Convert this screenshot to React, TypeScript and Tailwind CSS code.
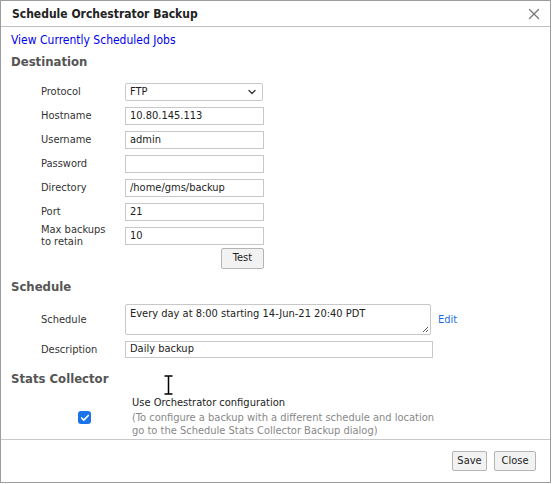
import { X, ChevronDown, Check } from 'lucide-react'

const font = { fontFamily: '"DejaVu Sans Condensed", "DejaVu Sans", sans-serif' }

const fields = [
  { label: 'Hostname', value: '10.80.145.113' },
  { label: 'Username', value: 'admin' },
  { label: 'Password', value: '' },
  { label: 'Directory', value: '/home/gms/backup' },
  { label: 'Port', value: '21' },
]

function Row({ label, children }: { label: React.ReactNode; children: React.ReactNode }) {
  return (
    <div className="flex items-center h-[24px]">
      <div className="w-[84px] pl-[30px] shrink-0 box-content text-[#333] leading-[12px]">{label}</div>
      {children}
    </div>
  )
}

function TextBox({ value, w = 'w-[139px] h-[18px]' }: { value: string; w?: string }) {
  return (
    <div className={`${w} border border-[#c8c8c8] px-[4px] flex items-center text-[#222]`}>{value}</div>
  )
}

function Heading({ children }: { children: React.ReactNode }) {
  return <div className="font-bold text-[13px] text-[#555] h-[22px] flex items-center">{children}</div>
}

function Button({ children, w }: { children: React.ReactNode; w: string }) {
  return (
    <button className={`${w} border border-[#b4b4b4] rounded-[2px] bg-[#f2f2f2] text-[#222] text-[11px] flex items-center justify-center`}>
      {children}
    </button>
  )
}

export default function App() {
  return (
    <div className="w-[553px] h-[484px] bg-white relative text-[11px]" style={font}>
      <div className="w-[551px] h-[483px] border border-[#9c9c9c] flex flex-col">
        {/* title bar */}
        <div className="h-[26px] border-b border-[#c0c0c0] flex items-center justify-between pl-[11px] pr-[7px] shrink-0">
          <span className="font-bold text-[12px] text-[#222]">Schedule Orchestrator Backup</span>
          <X size={18} strokeWidth={1.75} className="text-[#777]" />
        </div>

        <div className="flex-1 px-[10px] pt-[5px]">
          <a className="text-[#0000ee] text-[12px] h-[16px] flex items-center">View Currently Scheduled Jobs</a>
          <div className="mt-[3px]">
            <Heading>Destination</Heading>
          </div>

          <div className="mt-[7px]">
            <Row label="Protocol">
              <div className="w-[138px] h-[18px] border border-[#c8c8c8] rounded-[2px] pl-[4px] pr-[4px] flex items-center justify-between text-[#222]">
                <span>FTP</span>
                <ChevronDown size={12} strokeWidth={3} className="text-[#444]" />
              </div>
            </Row>
            {fields.map(f => (
              <Row key={f.label} label={f.label}>
                <TextBox value={f.value} />
              </Row>
            ))}
            <Row label={<>Max backups<br />to retain</>}>
              <TextBox value="10" />
            </Row>
            <div className="flex pl-[210px]">
              <Button w="w-[43px] h-[21px]">Test</Button>
            </div>
          </div>

          <div className="mt-[7px]">
            <Heading>Schedule</Heading>
          </div>

          <div className="flex items-center mt-[5px] h-[32px]">
            <div className="w-[84px] pl-[30px] pt-[3px] shrink-0 box-content text-[#333]">Schedule</div>
            <div className="relative w-[306px] h-[31px] border border-[#c8c8c8] rounded-[2px] px-[4px] pt-[1px] text-[#222]">
              Every day at 8:00 starting 14-Jun-21 20:40 PDT
              <svg className="absolute right-[1px] bottom-[1px]" width="7" height="7" viewBox="0 0 7 7">
                <path d="M6 1 L1 6 M6 4 L4 6" stroke="#555" strokeWidth="1" />
              </svg>
            </div>
            <a className="ml-[7px] pt-[3px] text-[#1a6fe0]">Edit</a>
          </div>
          <div className="flex items-center mt-[6px] h-[17px]">
            <div className="w-[84px] pl-[30px] pt-[2px] shrink-0 box-content text-[#333]">Description</div>
            <TextBox value="Daily backup" w="w-[308px] h-[17px]" />
          </div>

          <div className="mt-[10px]">
            <Heading>Stats Collector</Heading>
          </div>

          <div className="flex items-start mt-[5px]">
            <div className="w-[114px] shrink-0 flex justify-end pr-[34px]">
              <div className="w-[13px] h-[13px] rounded-[3px] bg-[#1a73e8] flex items-center justify-center mt-[16px]">
                <Check size={10} strokeWidth={4} className="text-white" />
              </div>
            </div>
            <div className="pl-[7px]">
              <div className="text-[#222] h-[16px] flex items-center">Use Orchestrator configuration</div>
              <div className="text-[#888] leading-[13px]">
                (To configure a backup with a different schedule and location
                <br />
                go to the Schedule Stats Collector Backup dialog)
              </div>
            </div>
          </div>
        </div>

        {/* footer */}
        <div className="h-[43px] border-t border-[#c8c8c8] flex items-start justify-end gap-[7px] pr-[14px] pt-[11px] shrink-0">
          <Button w="w-[35px] h-[20px]">Save</Button>
          <Button w="w-[42px] h-[20px]">Close</Button>
        </div>
      </div>

      {/* text cursor */}
      <svg className="absolute left-[164px] top-[375px]" width="9" height="20" viewBox="0 0 9 20">
        <path d="M0.5 1 H8.5 M4.5 1 V19 M0.5 19 H8.5" stroke="#000" strokeWidth="1.5" fill="none" />
      </svg>
    </div>
  )
}
